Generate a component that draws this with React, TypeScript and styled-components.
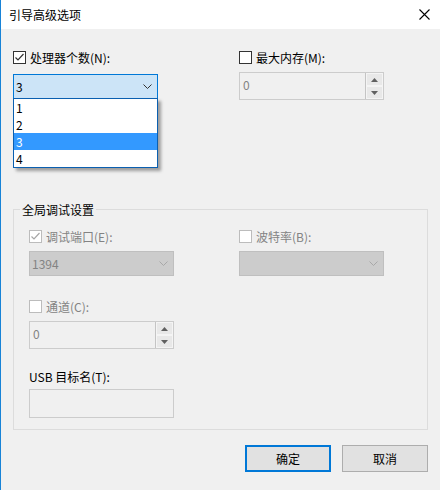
import React from 'react';
import styled, { createGlobalStyle } from 'styled-components';

const Global = createGlobalStyle`
  html, body { margin: 0; padding: 0; background: #f0f0f0; }
  body { font-family: "Noto Sans CJK SC", "Noto Sans", sans-serif; font-size: 12px; color: #000; }
  * { box-sizing: border-box; }
`;

const Window = styled.div`
  width: 440px; height: 490px; border-left: 1px solid #1883d7; background: #f0f0f0;
  display: flex; flex-direction: column;
`;

const TitleBar = styled.div`
  height: 29px; flex: none; background: #fff; display: flex; align-items: center;
  justify-content: space-between; padding: 0 10px 0 8px;
`;

const Title = styled.span`
  font-size: 12px; line-height: 16px; color: #000;
`;

const Body = styled.div`
  padding: 22px 11px 0 12px; display: flex; flex-direction: column;
`;

const Grid = styled.div<{ gap: number }>`
  display: grid; grid-template-columns: 145px 145px; column-gap: ${({ gap }) => gap}px; align-items: start;
`;

const Field = styled.div<{ top?: number }>`
  display: flex; flex-direction: column; margin-top: ${({ top = 0 }) => top}px;
`;

const CheckRow = styled.label<{ disabled?: boolean }>`
  display: flex; align-items: center; gap: 4px; height: 13px; line-height: 13px;
  color: ${({ disabled }) => (disabled ? '#838383' : '#000')};
  white-space: nowrap;
`;

const Box = styled.span<{ disabled?: boolean }>`
  width: 13px; height: 13px; flex: none; display: flex; align-items: center; justify-content: center;
  border: 1px solid ${({ disabled }) => (disabled ? '#bcbcbc' : '#333')};
  background: #fff;
`;

const Combo = styled.div<{ open?: boolean; disabled?: boolean; gap: number }>`
  position: relative; margin-top: ${({ gap }) => gap}px; width: 145px; height: 25px;
  display: flex; align-items: center; justify-content: space-between; padding: 0 5px 0 2px;
  border: 1px solid ${({ open, disabled }) => (open ? '#0078d7' : disabled ? '#bfbfbf' : '#adadad')};
  background: ${({ open, disabled }) => (open ? '#cce4f7' : disabled ? '#cccccc' : '#e1e1e1')};
  color: ${({ disabled }) => (disabled ? '#838383' : '#000')};
  line-height: 16px;
`;

const List = styled.ul`
  position: absolute; top: 100%; left: -1px; width: 145px; margin: 0; padding: 0; list-style: none;
  background: #fff; border: 1px solid #0a5fb0; box-shadow: 3px 3px 3px rgba(0, 0, 0, 0.35); z-index: 2;
`;

const Item = styled.li<{ active?: boolean }>`
  height: 17px; line-height: 17px; padding-left: 2px;
  background: ${({ active }) => (active ? '#3399ff' : '#fff')};
  color: ${({ active }) => (active ? '#fff' : '#000')};
`;

const Spin = styled.div<{ gap: number }>`
  margin-top: ${({ gap }) => gap}px; width: 145px; height: 28px; display: flex;
  border: 1px solid #cccccc; background: #f0f0f0;
`;

const SpinValue = styled.div`
  flex: 1; padding: 4px 3px 0; color: #838383; line-height: 16px;
`;

const SpinButtons = styled.div`
  width: 18px; display: flex; flex-direction: column; border-left: 1px solid #c4c4c4;
`;

const SpinButton = styled.div`
  flex: 1; display: flex; align-items: center; justify-content: center;
  background: #e8e8e8; border: 1px solid #f4f4f4;
`;

const Group = styled.fieldset`
  margin: 101px 0 0; min-width: 0; width: 415px; padding: 12px 15px 11px;
  border: 1px solid #dcdcdc;
`;

const Legend = styled.legend`
  margin-left: -9px; padding: 0 2px; line-height: 17px; color: #000;
`;

const Plain = styled.div`
  margin-top: 19px; height: 17px; line-height: 17px; color: #000;
`;

const TextBox = styled.div`
  margin-top: 4px; width: 145px; height: 29px; border: 1px solid #cccccc; background: #f0f0f0;
`;

const Buttons = styled.div`
  margin-top: 15px; display: flex; justify-content: flex-end; gap: 11px; width: 415px;
`;

const Button = styled.button<{ primary?: boolean }>`
  width: 86px; height: 27px; padding: 0; font: inherit; color: #000; background: #e1e1e1;
  border: ${({ primary }) => (primary ? '2px solid #0078d7' : '1px solid #adadad')};
`;

const Check = ({ color }: { color: string }) => (
  <svg width="11" height="11" viewBox="0 0 11 11">
    <path d="M1.5 5.5 L4 8 L9.5 2" fill="none" stroke={color} strokeWidth="1.2" />
  </svg>
);

const Chevron = ({ color }: { color: string }) => (
  <svg width="9" height="5" viewBox="0 0 9 5">
    <path d="M0.5 0.5 L4.5 4.5 L8.5 0.5" fill="none" stroke={color} strokeWidth="1" />
  </svg>
);

const Arrow = ({ up }: { up?: boolean }) => (
  <svg width="7" height="4" viewBox="0 0 7 4">
    <path d={up ? 'M0 4 L3.5 0 L7 4 Z' : 'M0 0 L3.5 4 L7 0 Z'} fill="#606060" />
  </svg>
);

const CheckField = ({ label, checked, disabled }: { label: string; checked?: boolean; disabled?: boolean }) => (
  <CheckRow disabled={disabled}>
    <Box disabled={disabled}>{checked && <Check color={disabled ? '#a6a6a6' : '#333'} />}</Box>
    {label}
  </CheckRow>
);

const SpinBox = ({ value, gap }: { value: string; gap: number }) => (
  <Spin gap={gap}>
    <SpinValue>{value}</SpinValue>
    <SpinButtons>
      <SpinButton><Arrow up /></SpinButton>
      <SpinButton><Arrow /></SpinButton>
    </SpinButtons>
  </Spin>
);

export default function App() {
  return (
    <Window>
      <Global />
      <TitleBar>
        <Title>引导高级选项</Title>
        <svg width="11" height="11" viewBox="0 0 11 11">
          <path d="M0.5 0.5 L10.5 10.5 M10.5 0.5 L0.5 10.5" stroke="#000" strokeWidth="1.1" />
        </svg>
      </TitleBar>
      <Body>
        <Grid gap={81}>
          <Field>
            <CheckField label="处理器个数(N):" checked />
            <Combo open gap={10}>
              <span>3</span>
              <Chevron color="#333" />
              <List>
                {['1', '2', '3', '4'].map((n) => (
                  <Item key={n} active={n === '3'}>{n}</Item>
                ))}
              </List>
            </Combo>
          </Field>
          <Field>
            <CheckField label="最大内存(M):" />
            <SpinBox value="0" gap={8} />
          </Field>
        </Grid>
        <Group>
          <Legend>全局调试设置</Legend>
          <Grid gap={65}>
            <Field>
              <CheckField label="调试端口(E):" checked disabled />
              <Combo disabled gap={8}>
                <span>1394</span>
                <Chevron color="#a8a8a8" />
              </Combo>
            </Field>
            <Field>
              <CheckField label="波特率(B):" disabled />
              <Combo disabled gap={8}>
                <span />
                <Chevron color="#a8a8a8" />
              </Combo>
            </Field>
          </Grid>
          <Field top={24}>
            <CheckField label="通道(C):" disabled />
            <SpinBox value="0" gap={8} />
          </Field>
          <Plain>USB 目标名(T):</Plain>
          <TextBox />
        </Group>
        <Buttons>
          <Button primary>确定</Button>
          <Button>取消</Button>
        </Buttons>
      </Body>
    </Window>
  );
}
